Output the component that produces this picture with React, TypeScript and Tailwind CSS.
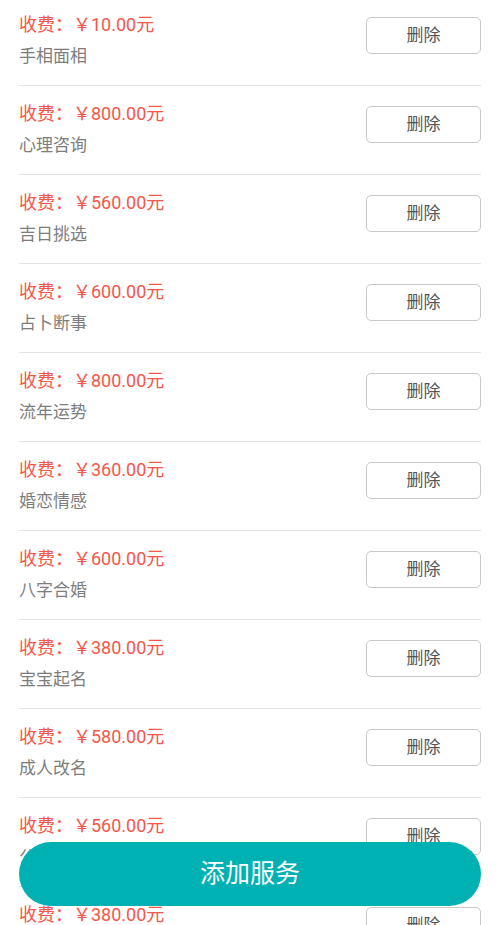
const services = [
    { price: '10.00', name: '手相面相' },
    { price: '800.00', name: '心理咨询' },
    { price: '560.00', name: '吉日挑选' },
    { price: '600.00', name: '占卜断事' },
    { price: '800.00', name: '流年运势' },
    { price: '360.00', name: '婚恋情感' },
    { price: '600.00', name: '八字合婚' },
    { price: '380.00', name: '宝宝起名' },
    { price: '580.00', name: '成人改名' },
    { price: '560.00', name: '公司起名' },
    { price: '380.00', name: '店铺起名' },
];

export default function App() {
    return (
        <div className="h-[925px] bg-white font-['Roboto','Noto_Sans_CJK_SC',sans-serif] overflow-hidden">
            <div className="-mt-[3px]">
                {services.map((s, i) => (
                    <div
                        key={i}
                        className="mx-[19px] h-[89px] border-b border-[#e3e3e3] flex justify-between items-start pt-[18px]"
                    >
                        <div className="flex flex-col">
                            <span className="text-[18px] leading-[20px] text-[#f5574b]">
                                收费：￥{s.price}元
                            </span>
                            <span className="mt-[11px] text-[17px] leading-[20px] text-[#7d7d7d]">
                                {s.name}
                            </span>
                        </div>
                        <button className="mt-[2px] w-[115px] h-[37px] rounded-[5px] border border-[#c9c9c9] bg-white text-[17px] text-[#555]">
                            删除
                        </button>
                    </div>
                ))}
            </div>

            {/* floating add button */}
            <button className="fixed left-[19px] right-[19px] bottom-[19px] h-[64px] rounded-full bg-[#00b1b3] text-white text-[25px]">
                添加服务
            </button>
        </div>
    );
}
